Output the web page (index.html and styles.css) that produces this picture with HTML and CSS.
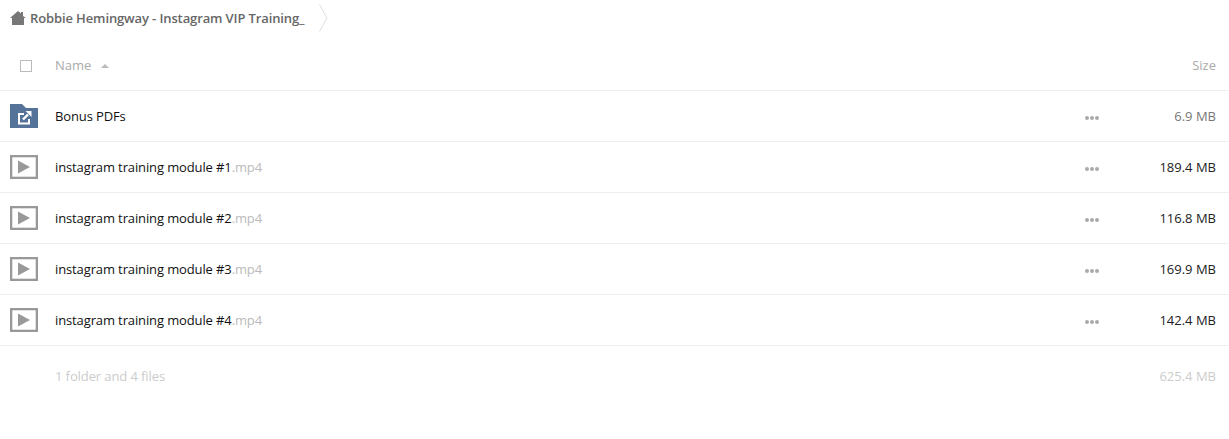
FILE: index.html
```html
<!DOCTYPE html>
<html lang="en">
<head>
  <meta charset="UTF-8" />
  <title>Robbie Hemingway - Instagram VIP Training_</title>
  <link rel="stylesheet" href="styles.css">
</head>
<body>
  <div class="breadcrumb">
    <svg class="home-icon" width="16" height="14" viewBox="0 0 16 14"><path d="M0 7 L8 0 L11 2.5 V1 H13 V5 L16 7 H14 V14 H2 V7 Z" fill="#777"/></svg>
    <span class="crumb-title">Robbie Hemingway - Instagram VIP Training_</span>
    <svg class="crumb-arrow" width="9" height="28" viewBox="0 0 9 28"><path d="M0.5 0.5 L8 14 L0.5 27.5" fill="none" stroke="#ddd"/></svg>
  </div>

  <div class="list-head">
    <span class="check"></span>
    <span class="head-name">Name</span>
    <span class="sort-arrow"></span>
    <span class="head-size">Size</span>
  </div>

  <div class="row">
    <svg class="file-icon" width="28" height="24" viewBox="0 0 28 24">
      <path d="M0 0 H12 L16 4 H28 V24 H0 Z" fill="#557398"/>
      <path d="M14 10 H9 V19.5 H19 V15" fill="none" stroke="#fff" stroke-width="2"/>
      <path d="M13 15.5 L18 10.5" stroke="#fff" stroke-width="2.4"/>
      <path d="M15.5 7 H21.5 V13 Z" fill="#fff"/>
    </svg>
    <span class="file-name">Bonus PDFs</span>
    <span class="dots"><i></i><i></i><i></i></span>
    <span class="file-size folder-size">6.9 MB</span>
  </div>

  <div class="row">
    <svg class="file-icon" width="28" height="24" viewBox="0 0 28 24">
      <rect x="1.15" y="1.15" width="25.7" height="21.7" fill="none" stroke="#999" stroke-width="2.3"/>
      <path d="M8 5.5 L20 12 L8 18.5 Z" fill="#999"/>
    </svg>
    <span class="file-name">instagram training module #1<span class="ext">.mp4</span></span>
    <span class="dots"><i></i><i></i><i></i></span>
    <span class="file-size">189.4 MB</span>
  </div>

  <div class="row">
    <svg class="file-icon" width="28" height="24" viewBox="0 0 28 24">
      <rect x="1.15" y="1.15" width="25.7" height="21.7" fill="none" stroke="#999" stroke-width="2.3"/>
      <path d="M8 5.5 L20 12 L8 18.5 Z" fill="#999"/>
    </svg>
    <span class="file-name">instagram training module #2<span class="ext">.mp4</span></span>
    <span class="dots"><i></i><i></i><i></i></span>
    <span class="file-size">116.8 MB</span>
  </div>

  <div class="row">
    <svg class="file-icon" width="28" height="24" viewBox="0 0 28 24">
      <rect x="1.15" y="1.15" width="25.7" height="21.7" fill="none" stroke="#999" stroke-width="2.3"/>
      <path d="M8 5.5 L20 12 L8 18.5 Z" fill="#999"/>
    </svg>
    <span class="file-name">instagram training module #3<span class="ext">.mp4</span></span>
    <span class="dots"><i></i><i></i><i></i></span>
    <span class="file-size">169.9 MB</span>
  </div>

  <div class="row">
    <svg class="file-icon" width="28" height="24" viewBox="0 0 28 24">
      <rect x="1.15" y="1.15" width="25.7" height="21.7" fill="none" stroke="#999" stroke-width="2.3"/>
      <path d="M8 5.5 L20 12 L8 18.5 Z" fill="#999"/>
    </svg>
    <span class="file-name">instagram training module #4<span class="ext">.mp4</span></span>
    <span class="dots"><i></i><i></i><i></i></span>
    <span class="file-size">142.4 MB</span>
  </div>

  <div class="summary">
    <span class="summary-count">1 folder and 4 files</span>
    <span>625.4 MB</span>
  </div>
</body>
</html>
```

FILE: styles.css
```css
* {
  margin: 0;
  padding: 0;
  box-sizing: border-box;
}

body {
  font-family: 'Open Sans', sans-serif;
  font-size: 13px;
  color: #222;
  background: white;
  overflow: hidden;
}

.breadcrumb {
  height: 40px;
  padding: 0 0 4px 10px;
  display: flex;
  align-items: center;
}

.home-icon {
  margin-right: 4px;
}

.crumb-title {
  font-weight: 600;
  color: #666;
  letter-spacing: -0.12px;
}

.crumb-arrow {
  margin-left: 15px;
}

.list-head {
  height: 51px;
  padding: 0 13px 0 20px;
  display: flex;
  align-items: center;
  border-bottom: 1px solid #eee;
}

.check {
  width: 12px;
  height: 12px;
  margin-top: 2px;
  border: 1px solid #bbb;
  margin-right: 23px;
}

.head-name {
  color: #aaa;
}

.sort-arrow {
  width: 0;
  height: 0;
  margin-left: 10px;
  margin-top: 2px;
  border-left: 4px solid transparent;
  border-right: 4px solid transparent;
  border-bottom: 4px solid #bbb;
}

.head-size {
  margin-left: auto;
  color: #aaa;
}

.row {
  height: 51px;
  padding: 0 13px 0 10px;
  display: flex;
  align-items: center;
  border-bottom: 1px solid #eee;
}

.file-icon {
  margin-right: 17px;
}

.file-name {
  color: #111;
  letter-spacing: -0.12px;
}

.ext {
  color: #bbb;
}

.dots {
  margin-left: auto;
  margin-top: 4px;
  display: flex;
  gap: 1px;
}

.dots i {
  width: 4px;
  height: 4px;
  border-radius: 50%;
  background: #aaa;
}

.file-size {
  width: 117px;
  text-align: right;
  color: #222;
}

.folder-size {
  color: #777;
}

.summary {
  height: 60px;
  padding: 0 13px 0 55px;
  display: flex;
  align-items: center;
  justify-content: space-between;
  color: #ccc;
}

.summary-count {
  letter-spacing: -0.1px;
}
```
